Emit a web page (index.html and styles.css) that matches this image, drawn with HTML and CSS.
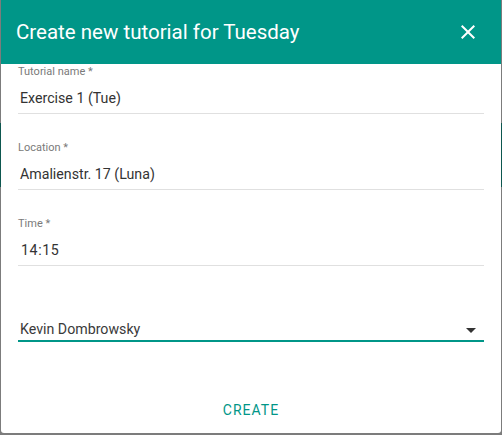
FILE: index.html
```html
<!DOCTYPE html>
<html>
<head>
<meta charset="utf-8">
<link rel="stylesheet" href="styles.css">
</head>
<body>
<div class="backdrop">
  <div class="backdrop-bar"></div>
</div>
<div class="dialog">
  <div class="dialog-header">
    <h1 class="dialog-title">Create new tutorial for Tuesday</h1>
    <svg class="close-icon" width="24" height="24" viewBox="0 0 24 24"><path fill="#fff" d="M19 6.41L17.59 5 12 10.59 6.41 5 5 6.41 10.59 12 5 17.59 6.41 19 12 13.41 17.59 19 19 17.59 13.41 12z"/></svg>
  </div>
  <div class="dialog-body">
    <div class="field">
      <div class="field-label">Tutorial name *</div>
      <div class="field-value">Exercise 1 (Tue)</div>
    </div>
    <div class="field">
      <div class="field-label">Location *</div>
      <div class="field-value">Amalienstr. 17 (Luna)</div>
    </div>
    <div class="field">
      <div class="field-label">Time *</div>
      <div class="field-value time">14:15</div>
    </div>
    <div class="select">
      <span class="select-value">Kevin Dombrowsky</span>
      <span class="select-arrow"></span>
    </div>
  </div>
  <div class="dialog-actions">
    <button class="btn-create">CREATE</button>
  </div>
</div>
</body>
</html>
```
FILE: styles.css
```css
html, body {
  margin: 0;
  padding: 0;
}
body {
  background: #7c7c7c;
  width: 502px;
  height: 435px;
  overflow: hidden;
  font-family: Roboto, "Liberation Sans", Arial, sans-serif;
}
.backdrop {
  padding-top: 123px;
}
.backdrop-bar {
  height: 64px;
  background: #0d574f;
}
.dialog {
  position: absolute;
  top: 0;
  left: 1px;
  width: 500px;
  height: 433px;
  background: #fff;
  border-radius: 0 0 3px 3px;
  display: flex;
  flex-direction: column;
}
.dialog-header {
  height: 64px;
  background: #009688;
  display: flex;
  align-items: center;
  padding: 0 21px 0 15px;
}
.dialog-title {
  flex: 1;
  margin: 0;
  font-size: 20.5px;
  font-weight: 400;
  line-height: 64px;
  color: #fff;
}
.close-icon {
  display: block;
}
.dialog-body {
  padding: 0 17px;
  flex: 1;
}
.field {
  margin-bottom: 26px;
}
.field-label {
  font-size: 11px;
  line-height: 16px;
  color: #7a7a7a;
}
.field-value {
  margin-top: 8px;
  font-size: 14.2px;
  line-height: 20px;
  color: #333;
  padding: 0 0 5px 2px;
  border-bottom: 1px solid #e0e0e0;
}
.field-value.time {
  padding-left: 3px;
  letter-spacing: 0.6px;
}
.select {
  margin-top: 53px;
  display: flex;
  align-items: center;
  border-bottom: 2px solid #009688;
  padding: 0 8px 1px 2px;
}
.select-value {
  flex: 1;
  font-size: 14.2px;
  line-height: 20px;
  color: #3a3a3a;
}
.select-arrow {
  width: 0;
  height: 0;
  border-left: 5px solid transparent;
  border-right: 5px solid transparent;
  border-top: 5px solid #333;
  margin-top: 2px;
}
.dialog-actions {
  display: flex;
  justify-content: center;
  padding-bottom: 5px;
}
.btn-create {
  background: none;
  border: none;
  font-family: Roboto, "Liberation Sans", Arial, sans-serif;
  font-size: 14px;
  line-height: 36px;
  height: 36px;
  padding: 0 8px;
  color: #009688;
  letter-spacing: 1px;
}
```
